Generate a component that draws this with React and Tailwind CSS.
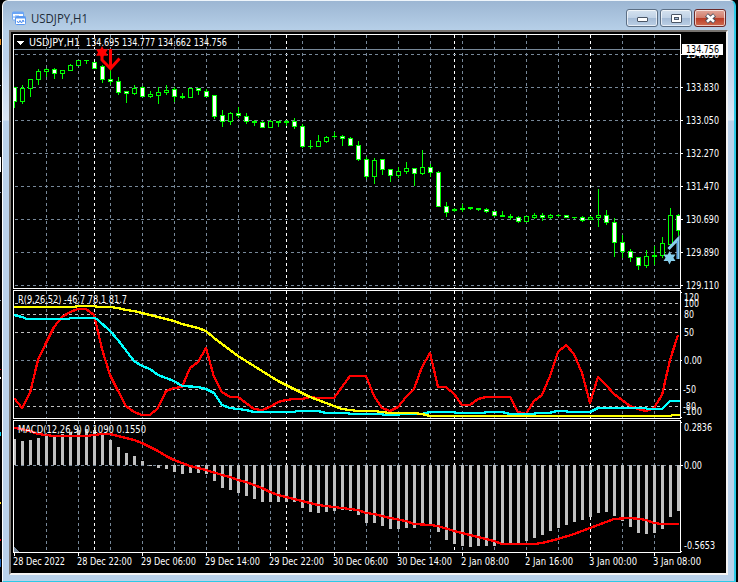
import React from "react";

const X = (i) => 14 + 8 * i;

// [high, bodyTop, bodyBottom, low, filled]
const candles = [
  [87, 87, 101, 107, 1], [85, 88, 101, 103, 0], [79, 79, 88, 96, 0], [69, 71, 79, 84, 0],
  [68, 69, 71, 76, 0], [68, 69, 73, 78, 1], [70, 70, 73, 78, 0], [64, 65, 70, 70, 0],
  [60, 60, 65, 65, 0], [60, 60, 60, 63, 0], [62, 62, 68, 68, 1], [65, 66, 79, 82, 1],
  [70, 79, 81, 84, 1], [77, 81, 92, 94, 1], [91, 91, 93, 102, 1], [85, 88, 93, 94, 0],
  [86, 87, 96, 96, 1], [91, 94, 96, 97, 0], [87, 92, 95, 103, 0], [85, 90, 92, 94, 0],
  [87, 89, 96, 101, 1], [93, 96, 97, 98, 1], [88, 88, 97, 97, 0], [88, 88, 90, 94, 1],
  [89, 91, 96, 96, 1], [95, 95, 116, 118, 1], [110, 115, 121, 126, 1], [112, 113, 121, 124, 0],
  [107, 113, 115, 117, 1], [113, 116, 121, 123, 1], [120, 121, 122, 125, 1], [121, 122, 127, 127, 1],
  [120, 121, 127, 127, 0], [121, 121, 122, 126, 1], [120, 121, 122, 125, 1], [118, 121, 126, 128, 1],
  [124, 126, 146, 147, 1], [140, 146, 146, 148, 1], [135, 141, 146, 146, 0], [136, 137, 141, 142, 0],
  [132, 136, 136, 137, 1], [135, 136, 138, 145, 1], [137, 138, 145, 145, 1], [141, 145, 159, 160, 1],
  [157, 159, 176, 178, 1], [158, 160, 176, 183, 0], [159, 159, 169, 174, 1], [169, 169, 175, 181, 1],
  [167, 171, 175, 177, 0], [162, 168, 171, 173, 0], [168, 168, 173, 185, 1], [150, 167, 173, 174, 0],
  [164, 167, 172, 176, 1], [171, 172, 206, 206, 1], [202, 206, 212, 216, 1], [208, 209, 210, 211, 1],
  [204, 208, 209, 211, 1], [207, 207, 208, 209, 1], [208, 208, 209, 210, 1], [208, 209, 211, 212, 1],
  [211, 211, 215, 216, 1], [211, 215, 216, 216, 1], [214, 216, 217, 219, 1], [216, 217, 221, 222, 1],
  [216, 216, 221, 221, 0], [213, 215, 217, 218, 0], [213, 215, 217, 220, 1], [214, 215, 217, 218, 0],
  [214, 215, 215, 216, 1], [215, 215, 217, 217, 1], [217, 217, 217, 218, 1], [216, 217, 220, 221, 1],
  [216, 217, 219, 219, 0], [189, 215, 217, 226, 0], [210, 215, 222, 224, 1], [218, 222, 242, 256, 1],
  [235, 242, 251, 257, 1], [249, 251, 257, 261, 1], [257, 257, 265, 269, 1], [250, 256, 265, 267, 0],
  [246, 255, 256, 264, 1], [237, 243, 255, 257, 0], [208, 215, 244, 245, 0], [214, 215, 230, 235, 1],
];

const fastR = [
  398, 408, 393, 360, 343, 327, 317, 312, 309, 309, 315, 349, 375, 391, 406, 412, 415, 415, 408, 391, 388,
  387, 368, 362, 348, 377, 392, 397, 397, 403, 409, 410, 407, 402, 400, 399, 399, 397, 398, 398, 398, 387,
  376, 376, 376, 396, 408, 411, 407, 397, 389, 367, 353, 387, 387, 394, 405, 405, 399, 397, 397, 397, 397,
  412, 414, 401, 395, 376, 352, 345, 354, 373, 403, 377, 385, 394, 400, 406, 409, 411, 408, 395, 360, 335,
];

const yellow =
  "14,307 74,307 78,306 94,306 98,307 110,307 118,308 126,310 134,311 142,313 158,317 174,321 182,324 198,328 206,331 214,338 238,356 278,381 310,397 334,406 342,409 358,411 374,411 382,412 390,413 414,413 422,414 430,416 671,416 672,415 680,415";
const cyan =
  "14,315 22,317 27,319 68,319 71,318 95,318 98,320 110,331 118,340 134,361 142,366 150,369 158,375 174,381 182,386 198,387 206,389 214,393 222,405 230,408 238,409 246,410 254,412 294,412 297,411 318,411 326,413 348,413 350,414 382,414 384,415 398,415 400,414 422,414 430,412 454,412 456,413 484,413 486,412 502,412 510,414 534,414 536,413 550,413 552,412 558,411 566,411 568,412 590,412 598,408 645,408 648,409 662,409 670,401 680,401";
const signal =
  "14,428 22,429 30,431 38,434 46,435 54,436 86,436 94,435 102,434 110,434 118,436 126,438 134,440 142,443 150,447 158,451 166,456 174,460 182,463 190,466 206,470 222,475 230,477 238,480 246,482 254,485 262,488 270,492 278,495 286,497 302,501 318,505 334,507 350,509 358,510 366,513 374,514 390,518 406,521 414,524 430,525 438,526 454,531 470,535 486,539 494,541 502,544 534,544 542,543 558,539 574,534 590,528 606,522 614,519 630,518 640,519 646,520 654,523 662,524 679,524";

const macd = [
  439, 441, 440, 438, 436, 435, 434, 432, 430, 429, 430, 435, 440, 447, 453, 456, 461, 466, 468, 469, 472, 474,
  473, 473, 474, 481, 488, 490, 493, 496, 499, 502, 502, 502, 502, 502, 508, 512, 513, 512, 511, 510, 511, 515,
  523, 523, 526, 529, 529, 528, 528, 526, 526, 532, 540, 544, 546, 547, 546, 546, 546, 545, 544, 543, 541, 538,
  535, 531, 528, 525, 522, 520, 517, 513, 512, 516, 521, 527, 533, 534, 533, 529, 517, 511,
];

const gridX = Array.from({ length: 20 }, (_, k) => 46 + 32 * k);
const dayX = [94, 286, 454, 590];
const panels = [[35, 288], [291, 418], [421, 552]];
const priceRows = [54, 87, 120, 153, 186, 219, 252, 285];
const SLATE = "#778899";
const SILVER = "#c0c0c0";

// [x, baseline, width, label]
const axis = [
  [686, 91, 33, "133.830"], [686, 124, 33, "133.050"], [686, 157, 33, "132.270"],
  [686, 190, 33, "131.470"], [686, 223, 33, "130.690"], [686, 256, 33, "129.890"],
  [686, 289, 33, "129.110"], [684, 301, 15, "120"], [684, 307, 15, "100"], [684, 318, 10, "80"],
  [684, 336, 10, "50"], [684, 364, 18, "0.00"], [683, 393, 13, "-50"], [683, 410, 13, "-80"],
  [683, 415, 19, "-100"], [684, 431, 28, "0.2836"], [684, 469, 18, "0.00"], [684, 549, 31, "-0.5653"],
];
const dates = [
  [13, 52, "28 Dec 2022"], [77, 55, "28 Dec 22:00"], [141, 55, "29 Dec 06:00"], [205, 55, "29 Dec 14:00"],
  [269, 55, "29 Dec 22:00"], [333, 55, "30 Dec 06:00"], [397, 55, "30 Dec 14:00"], [461, 48, "2 Jan 08:00"],
  [525, 48, "2 Jan 16:00"], [589, 48, "3 Jan 00:00"], [653, 48, "3 Jan 08:00"],
];

function Label({ x, y, w, children, fill = "#fff" }) {
  return (
    <text x={x} y={y} textLength={w} lengthAdjust="spacingAndGlyphs" fill={fill}>
      {children}
    </text>
  );
}

function Candle({ x, c }) {
  const [h, t, b, l, filled] = c;
  return (
    <g fill="#00ff00">
      <rect x={x} y={h} width="1" height={l - h + 1} />
      <rect x={x - 2} y={t} width="5" height={b - t + 1} />
      {b - t > 1 && <rect x={x - 1} y={t + 1} width="3" height={b - t - 1} fill={filled ? "#fff" : "#000"} />}
    </g>
  );
}

function Chart() {
  return (
    <svg
      width="715"
      height="541"
      viewBox="11 32 715 541"
      shapeRendering="crispEdges"
      className="block font-['DejaVu_Sans_Condensed','DejaVu_Sans',sans-serif] text-[10.5px]"
    >
      <defs>
        <clipPath id="plot">
          <rect x="14" y="35" width="666" height="517" />
        </clipPath>
      </defs>
      <g strokeWidth="1" strokeDasharray="3 3">
        {panels.map(([a, b]) => (
          <g key={a}>
            {gridX.map((x) => <path key={x} d={`M${x + 0.5} ${a}V${b}`} stroke={SLATE} />)}
            {dayX.map((x) => <path key={x} d={`M${x + 0.5} ${a}V${b}`} stroke="#fff" />)}
          </g>
        ))}
        {[...priceRows, 360, 465].map((y) => <path key={y} d={`M15 ${y + 0.5}H680`} stroke={SLATE} />)}
        {[303, 314, 332, 389, 406].map((y) => <path key={y} d={`M15 ${y + 0.5}H680`} stroke={SILVER} />)}
      </g>
      <path d="M14 49.5H681" stroke={SLATE} />
      <g clipPath="url(#plot)">
        {candles.map((c, i) => <Candle key={i} x={X(i)} c={c} />)}
        {macd.map((y, i) => (
          <rect key={i} x={X(i) - 1} y={Math.min(y, 465)} width="3" height={Math.max(1, Math.abs(y - 465))} fill={SILVER} />
        ))}
        <g fill="none" strokeWidth="2.3" strokeLinejoin="round">
          <polyline points={fastR.map((y, i) => `${X(i)},${y}`).join(" ")} stroke="#f00" />
          <polyline points={cyan} stroke="#0ff" />
          <polyline points={yellow} stroke="#ff0" />
          <polyline points={signal} stroke="#f00" />
        </g>
        <path d="M14 547L20 552H14Z" fill={SLATE} />
        <g shapeRendering="auto">
          <path d="M102 46l1.7 3.2h4.3l-2.1 3.3 2.1 3.3h-4.3l-1.7 3.2-1.7-3.2h-4.3l2.1-3.3-2.1-3.3h4.3z" fill="#f00" />
          <path d="M110.500 49V68M102 54V60L110.500 68.500 119.500 58.500" fill="none" stroke="#f00" strokeWidth="3" />
          <path d="M669.500 251l1.700 3.500h4.300l-2.100 3.200 2.100 3.200h-4.300l-1.700 3.600-1.700-3.600h-4.300l2.100-3.200-2.100-3.200h4.300z" fill="#87ceeb" />
          <path d="M678 259V239L668.500 249" fill="none" stroke="#87ceeb" strokeWidth="3" />
          <path d="M677.500 241V259" stroke="#5b9be0" />
        </g>
      </g>
      <path
        d="M13.500 34V288M13.500 290V418M13.500 420V553M680.500 34V289M680.500 290V419M680.500 420V553M13 34.500H681M13 288.500H681M13 290.500H681M13 418.500H681M13 420.500H681M13 552.500H681"
        stroke="#fff"
      />
      <path
        d="M681 87.500h2M681 120.500h2M681 153.500h2M681 186.500h2M681 219.500h2M681 252.500h2M681 285.500h2M681 54.500h2M681 292.500h1M681 360.500h1M681 417.500h1M681 422.500h1M681 465.500h2M681 551.500h1"
        stroke="#fff"
      />
      {dates.map(([x]) => <path key={x} d={`M${x + 1.5} 553v3`} stroke="#fff" />)}
      <path d="M17 41H24L20.500 45Z" fill="#fff" />
      <Label x={29} y={46} w={51}>USDJPY,H1</Label>
      <Label x={86} y={46} w={141}>134.695 134.777 134.662 134.756</Label>
      <Label x={18} y={303} w={109}>R(9,26,52) -46.7 78.1 81.7</Label>
      <Label x={18} y={433} w={128}>MACD(12,26,9) 0.1090 0.1550</Label>
      <Label x={686} y={58} w={33}>134.630</Label>
      <rect x="682" y="44" width="41" height="11" fill="#fff" />
      <Label x={686} y={53} w={33} fill="#000">134.756</Label>
      {axis.map(([x, y, w, s]) => <Label key={y + s} x={x} y={y} w={w}>{s}</Label>)}
      {dates.map(([x, w, s]) => <Label key={s} x={x} y={565} w={w}>{s}</Label>)}
    </svg>
  );
}

// Slivers of the neighbouring chart window: [gap above, height, colour class]
const slivers = [
  [39, 6, "bg-[#e08a1e]"], [40, 1, "bg-slate-400"], [35, 1, "bg-slate-400"], [35, 15, "bg-white"],
  [20, 1, "bg-slate-400"], [107, 1, "bg-slate-400"], [68, 1, "bg-red-600"], [7, 2, "bg-white"],
  [53, 4, "bg-cyan-400"], [66, 2, "bg-yellow-300"], [35, 2, "bg-red-600"], [18, 8, "bg-[#1b62b5]"],
];

const button =
  "flex h-[18px] w-8 items-center justify-center rounded-[3px] border border-[#5c6f85] shadow-[inset_0_0_0_1px_rgba(255,255,255,0.65)]";

export default function App() {
  return (
    <div className="flex h-[582px] w-[738px] overflow-hidden bg-black">
      <div className="w-[2px] shrink-0">
        {slivers.map(([gap, h, color], i) => (
          <div key={i} style={{ paddingTop: gap }}>
            <div className={`w-px ${color}`} style={{ height: h }} />
          </div>
        ))}
      </div>
      <div className="flex w-[734px] shrink-0 flex-col rounded-t-[6px] border-b border-l border-r-2 border-t border-b-[#2cc9e6] border-l-white border-r-[#2cc9e6] border-t-[#eef5fb] bg-[linear-gradient(to_bottom,#9cb6d3_0px,#b7d0e8_30px,#bbd1eb_60px,#dbe7f5_119px,#b9d1ea_120px)]">
        <div className="flex h-[29px] shrink-0 items-center pl-[9px] pr-[8px] pt-[5px]">
          <svg width="15" height="15" viewBox="0 0 15 15" className="mr-[4px] shrink-0">
            <rect x="0.500" y="1" width="11" height="8" rx="1" fill="#fff" stroke="#6ba5f5" />
            <path d="M0.500 2h11" stroke="#6ba5f5" strokeWidth="2" />
            <path d="M2 7V5M4 7V4M6 6V4" stroke="#6ba5f5" />
            <rect x="3.500" y="5.500" width="10" height="8" rx="1" fill="#fff" stroke="#5a98f0" />
            <path d="M3.500 6.500h10" stroke="#5a98f0" strokeWidth="2" />
            <path d="M5 10l1.500 2L8 9.500 9.500 12 11 9l1 2" fill="none" stroke="#4a8cf0" />
          </svg>
          <svg width="60" height="18" className="font-['Open_Sans','Noto_Sans',sans-serif] text-[12.5px]">
            <text x="0" y="14" textLength="57" lengthAdjust="spacingAndGlyphs" fill="#1e2b38">USDJPY,H1</text>
          </svg>
          <div className="ml-auto flex gap-[2px]">
            <div className={`${button} bg-[linear-gradient(#d5e2ef_0%,#c0d2e6_48%,#a3bad5_50%,#bcd0e6_100%)]`}>
              <div className="mt-[3px] h-[5px] w-[11px] rounded-[1px] border border-[#4b5666] bg-white" />
            </div>
            <div className={`${button} bg-[linear-gradient(#d5e2ef_0%,#c0d2e6_48%,#a3bad5_50%,#bcd0e6_100%)]`}>
              <div className="flex h-[9px] w-[11px] items-center justify-center rounded-[1px] border border-[#4b5666] bg-white">
                <div className="h-[3px] w-[5px] border border-[#4b5666] bg-[#a3bad5]" />
              </div>
            </div>
            <div className={`${button} border-[#6b2a2a] bg-[linear-gradient(#e2a79b_0%,#d17d6c_48%,#b93a25_50%,#cf6c50_100%)]`}>
              <svg width="13" height="11" viewBox="0 0 13 11">
                <path d="M2.500 2L10.500 9M10.500 2L2.500 9" stroke="#4b4f5c" strokeWidth="4.400" />
                <path d="M3 2.300L10 8.700M10 2.300L3 8.700" stroke="#fff" strokeWidth="2.600" />
              </svg>
            </div>
          </div>
        </div>
        <div className="ml-[6px] h-[545px] w-[719px] border-b-2 border-l-2 border-r-2 border-t-2 border-b-[#f4f4f4] border-l-[#77736f] border-r-[#f4f4f4] border-t-[#77736f] bg-black">
          <Chart />
        </div>
      </div>
      <div className="w-[2px] shrink-0" />
    </div>
  );
}
